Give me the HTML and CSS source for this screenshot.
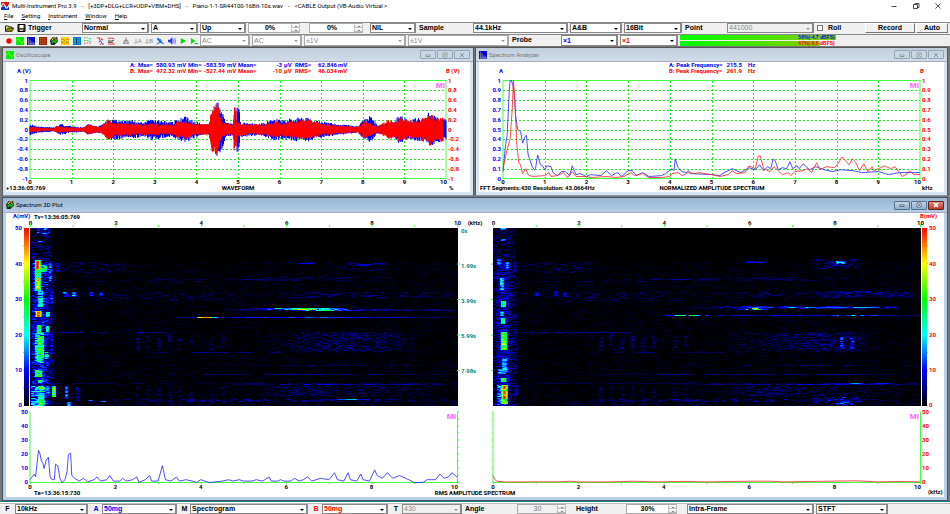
FILE: index.html
```html
<!DOCTYPE html>
<html lang="en">
<head>
<meta charset="utf-8">
<title>Multi-Instrument Pro 3.9</title>
<link rel="stylesheet" href="styles.css">
</head>
<body>
<header class="titlebar">
  <svg class="app-icon" viewBox="0 0 9 9"><path fill="#e01010" d="M0 0h9v5H0z"/><path fill="#1030d0" d="M0 5h9v4H0z"/><path d="M0 6C2 0 3 1 4.500 4.500S7 8 9 3" fill="none" stroke="#fff" stroke-width="1.300"/></svg>
  <span>Multi-Instrument Pro 3.9</span><span>-</span><span>[+3DP+DLG+LCR+UDP+VBM+DHS]</span><span>-</span><span>Piano-1-1-SR44100-16Bit-10s.wav</span><span>-</span><span>&lt;CABLE Output (VB-Audio Virtual &gt;</span>
  <div class="system">
    <button aria-label="Minimize"><svg viewBox="0 0 8 8"><path d="M1.500 4.500h5"/></svg></button>
    <button aria-label="Restore"><svg viewBox="0 0 8 8"><path d="M1.500 2.500h4v4h-4zM3 2.500v-1h4v4H5.500"/></svg></button>
    <button aria-label="Close"><svg viewBox="0 0 8 8"><path d="M1.500 1.500l5 5m0-5l-5 5"/></svg></button>
  </div>
</header>
<nav class="menu">
  <a href="#"><u>F</u>ile</a><a href="#"><u>S</u>etting</a><a href="#"><u>I</u>nstrument</a><a href="#"><u>W</u>indow</a><a href="#"><u>H</u>elp</a>
</nav>

<div class="bar bar-trigger">
  <div class="file-tools">
    <button aria-label="Open"><svg viewBox="0 0 9 8"><path d="M.5 7V2h3l.5 1h3v1" fill="#ff8" stroke="#220"/><path d="M.5 7.500L2.500 4H9L7 7.500z" fill="#880" stroke="#220" stroke-width=".7"/></svg></button>
    <button aria-label="Save"><svg viewBox="0 0 9 8"><path d="M1 .5h7v7H1z" fill="#442" stroke="#000"/><path d="M2.500 1h4v3h-4z" fill="#fff"/><path d="M3 5.500h3V7H3z" fill="#ccc"/></svg></button>
    <label for="trigger">Trigger</label>
  </div>
  <div class="combo"><select id="trigger"><option>Normal</option></select></div>
  <div class="combo"><select aria-label="Trigger source"><option>A</option></select></div>
  <div class="combo"><select aria-label="Trigger edge"><option>Up</option></select></div>
  <div class="spin"><input aria-label="Trigger level" value="0%"><div class="steps"><button aria-label="Up"></button><button aria-label="Down"></button></div></div>
  <span></span>
  <div class="spin"><input aria-label="Trigger delay" value="0%"><div class="steps"><button aria-label="Up"></button><button aria-label="Down"></button></div></div>
  <span></span>
  <div class="combo"><select aria-label="Filter"><option>NIL</option></select></div>
  <label for="rate">Sample</label>
  <div class="combo"><select id="rate"><option>44.1kHz</option></select></div>
  <div class="combo"><select aria-label="Channels"><option>A&amp;B</option></select></div>
  <div class="combo"><select aria-label="Resolution"><option>16Bit</option></select></div>
  <label for="points">Point</label>
  <div class="combo"><select id="points" disabled><option>441000</option></select></div>
  <label class="check"><input type="checkbox">Roll</label>
  <button class="push">Record</button>
  <button class="push">Auto</button>
</div>

<div class="bar bar-tools">
  <div class="icons">
    <button aria-label="Start"><svg viewBox="0 0 9 9"><circle cx="4.500" cy="4.500" r="3" fill="#f00"/></svg></button>
    <button aria-label="Oscilloscope"><svg viewBox="0 0 9 9"><path fill="#0e0" d="M0 0h9v9H0z"/><path d="M.5 4C2 1 3 2 4.500 4.500S7 8 8.500 4" fill="none" stroke="#af0"/></svg></button>
    <button aria-label="Spectrum analyzer"><svg viewBox="0 0 9 9"><path fill="#00d" d="M0 0h9v9H0z"/><path d="M1.500 1v7m2-5v5m2-3v3m2-2v2M1 8h8" stroke="#bb8" stroke-width=".8"/></svg></button>
    <button aria-label="Multimeter"><svg viewBox="0 0 9 9"><path fill="#821" d="M0 0h9v9H0z"/><path d="M1 2h7M1 4.500h7M1 7h7" stroke="#f92" stroke-dasharray="1.500 1"/></svg></button>
    <button aria-label="Spectrum 3D plot"><svg viewBox="0 0 9 9"><path fill="#222" d="M0 4l3-4h5l1 5-4 4H1z"/><path d="M2 4l2-3h3" stroke="#ff0" fill="none"/><path d="M2 7l2-3 2 2 2-3" stroke="#0c0" fill="none" stroke-width="1.500"/><circle cx="6.500" cy="3" r="1" fill="#f55"/></svg></button>
    <button aria-label="Data logger"><svg viewBox="0 0 9 9"><path fill="#fd0" d="M0 0h9v9H0z"/><path d="M0 3l2-1 2 2 2-2 3 1M0 7l2-1 2 2 2-2 3 1" stroke="#f50" fill="none"/><path d="M0 5h9" stroke="#5b2" stroke-dasharray="1 1"/></svg></button>
    <button aria-label="LCR meter"><svg viewBox="0 0 9 9"><path fill="#07c" d="M0 0h9v9H0z"/><path d="M1 2h7M1 4.500h7M1 7h7" stroke="#0ff" stroke-dasharray="2 1"/><path d="M4 1v7" stroke="#024"/></svg></button>
    <button aria-label="Device test plan"><svg viewBox="0 0 9 9"><path d="M0 1h4l2 1h3M0 4h5l1 1h3" stroke="#0c5" fill="none" stroke-dasharray="2 1"/><path d="M0 7h3l2-1 3 2" stroke="#f35" fill="none" stroke-dasharray="2 1"/></svg></button>
    <button aria-label="Derived data"><svg viewBox="0 0 9 9"><path d="M1 1h3v3M6 1v2h2" stroke="#d22" fill="none"/><path d="M3 6l2-2 2 4h2" stroke="#33d" fill="none"/><path d="M4 8h2" stroke="#d22"/></svg></button>
    <button aria-label="Vibrometer"><svg viewBox="0 0 9 9"><path d="M1 1l2 1 2-1 3 1" stroke="#c22" fill="none"/><path d="M1 4.500h4l3-1M1 6h6" stroke="#333" fill="none"/><path d="M1 8h8" stroke="#e22"/></svg></button>
    <button class="spaced" aria-label="Hold" disabled><svg viewBox="0 0 9 9"><path d="M4.500 0v3" stroke="#999"/><path d="M2 4l2.500-2L7 4l1 4H1z" fill="#999"/><path d="M3 5h3v2H3z" fill="#ccc"/></svg></button>
    <button class="ground" aria-label="Zero A" disabled><svg viewBox="0 0 4 9"><path d="M2 2v4M0 6.500h4"/></svg>A</button>
    <button class="ground" aria-label="Zero B" disabled><svg viewBox="0 0 4 9"><path d="M2 2v4M0 6.500h4"/></svg>B</button>
    <button aria-label="Probe calibration"><svg viewBox="0 0 9 9"><path d="M1.500 1.500l5 5" stroke="#06f" stroke-width="2"/><path d="M5 5L1 8M6 6l3 2M4 2l2 2" stroke="#04c" fill="none"/><path d="M3 6.500l1 1" stroke="#0cf"/></svg></button>
    <button aria-label="Sound"><svg viewBox="0 0 9 9"><path d="M0 3h2l3-3v9L2 6H0z" fill="#33f"/><path d="M6 2.500q1.500 2 0 4M7.500 1q2 3.500 0 7" stroke="#44f" fill="none" stroke-width=".8"/></svg></button>
    <button aria-label="Play"><svg viewBox="0 0 9 9"><path d="M2 1l6 3.500L2 8z" fill="#0d0"/></svg></button>
    <button aria-label="Play loop"><svg viewBox="0 0 9 9"><path d="M1 1l5 3.500L1 8z" fill="#0d0"/><path d="M5 7.500h4" stroke="#0a0"/></svg></button>
  </div>
  <div class="combo light"><select aria-label="Coupling A" disabled><option>AC</option></select></div>
  <div class="combo light"><select aria-label="Coupling B" disabled><option>AC</option></select></div>
  <div class="combo light"><select aria-label="Range A" disabled><option>±1V</option></select></div>
  <div class="combo light"><select aria-label="Range B" disabled><option>±1V</option></select></div>
  <label for="probe">Probe</label>
  <div class="combo chan-a"><select id="probe"><option>×1</option></select></div>
  <div class="combo chan-b"><select aria-label="Probe B"><option>×1</option></select></div>
  <div class="levels">
    <div class="level level-a"><span class="chan-a">58%(-4.7 dBFS)</span></div>
    <div class="level level-b"><span class="chan-b">47%(-6.6 dBFS)</span></div>
  </div>
</div>

<main class="desktop">
  <div class="pair">
    <section class="window">
      <div class="caption"><svg class="cap-icon" viewBox="0 0 9 9"><path fill="#0e0" d="M0 0h9v9H0z"/><path d="M.5 5C2 1 3 2 4.500 4.500S7 8 8.500 4" fill="none" stroke="#af0"/></svg><h2>Oscilloscope</h2>
        <div class="cap-buttons"><button aria-label="Minimize"><svg viewBox="0 0 8 6"><path d="M2 3h4v1.500H2z"/></svg></button><button aria-label="Maximize"><svg viewBox="0 0 8 6"><path d="M2 1h4v4H2zM3.500 2.500h1v1h-1z"/></svg></button><button aria-label="Close"><svg viewBox="0 0 8 6"><path d="M2 1l4 4m0-4L2 5"/></svg></button></div>
      </div>
      <svg class="plot" id="scope" viewBox="6 62 464 130"></svg>
    </section>
    <section class="window">
      <div class="caption"><svg class="cap-icon" viewBox="0 0 9 9"><path fill="#00d" d="M0 0h9v9H0z"/><path d="M1.500 1v7m2-5v5m2-3v3m2-2v2M1 8h8" stroke="#bb8" stroke-width=".8"/></svg><h2>Spectrum Analyzer</h2>
        <div class="cap-buttons"><button aria-label="Minimize"><svg viewBox="0 0 8 6"><path d="M2 3h4v1.500H2z"/></svg></button><button aria-label="Maximize"><svg viewBox="0 0 8 6"><path d="M2 1h4v4H2zM3.500 2.500h1v1h-1z"/></svg></button><button aria-label="Close"><svg viewBox="0 0 8 6"><path d="M2 1l4 4m0-4L2 5"/></svg></button></div>
      </div>
      <svg class="plot" id="spectrum" viewBox="479 62 465 130"></svg>
    </section>
  </div>
  <section class="window active">
    <div class="caption"><svg class="cap-icon" viewBox="0 0 9 9"><path fill="#222" d="M0 4l3-4h5l1 5-4 4H1z"/><path d="M2 4l2-3h3" stroke="#ff0" fill="none"/><path d="M2 7l2-3 2 2 2-3" stroke="#0c0" fill="none" stroke-width="1.500"/><circle cx="6.500" cy="3" r="1" fill="#f55"/></svg><h2>Spectrum 3D Plot</h2>
      <div class="cap-buttons"><button aria-label="Minimize"><svg viewBox="0 0 8 6"><path d="M2 3h4v1.500H2z"/></svg></button><button aria-label="Maximize"><svg viewBox="0 0 8 6"><path d="M2 1h4v4H2zM3.500 2.500h1v1h-1z"/></svg></button><button class="close" aria-label="Close"><svg viewBox="0 0 8 6"><path d="M2 1l4 4m0-4L2 5"/></svg></button></div>
    </div>
    <svg class="plot" id="plot3d" viewBox="6 213 938 284">
      <defs><linearGradient id="heat" x1="0" y1="1" x2="0" y2="0"><stop offset="0" stop-color="#000"/><stop offset=".2" stop-color="#00f"/><stop offset=".4" stop-color="#0ff"/><stop offset=".6" stop-color="#0f0"/><stop offset=".8" stop-color="#ff0"/><stop offset="1" stop-color="#f00"/></linearGradient></defs>
    </svg>
  </section>
</main>

<footer class="bar bar-plot">
  <label for="freq">F</label>
  <div class="combo"><select id="freq"><option>10kHz</option></select></div>
  <label class="chan-a" for="range-a">A</label>
  <div class="combo chan-a"><select id="range-a"><option>50mg</option></select></div>
  <label for="mode">M</label>
  <div class="combo"><select id="mode"><option>Spectrogram</option></select></div>
  <label class="chan-b" for="range-b">B</label>
  <div class="combo chan-b"><select id="range-b"><option>50mg</option></select></div>
  <label for="frames">T</label>
  <div class="combo"><select id="frames" disabled><option>430</option></select></div>
  <label class="left" for="angle">Angle</label>
  <div class="spin"><input id="angle" value="30" disabled><div class="steps"><button aria-label="Up"></button><button aria-label="Down"></button></div></div>
  <label class="left height-label" for="height">Height</label>
  <div class="spin"><input id="height" value="30%"><div class="steps"><button aria-label="Up"></button><button aria-label="Down"></button></div></div>
  <span></span>
  <div class="combo"><select aria-label="Frame mode"><option>Intra-Frame</option></select></div>
  <div class="combo"><select aria-label="Transform"><option>STFT</option></select></div>
</footer>
<script src="plots.js"></script>
</body>
</html>
```
FILE: styles.css
```css
* { box-sizing: border-box; }
body {
  margin: 0;
  min-height: 100vh;
  display: flex;
  flex-direction: column;
  background: #fff;
  color: #000;
  font-family: Roboto, "Liberation Sans", sans-serif;
  font-size: 6px;
  line-height: 8px;
}
button, select, input { font: inherit; color: inherit; margin: 0; padding: 0; border: 0; border-radius: 0; background: none; }
svg { display: block; }

.titlebar { display: flex; align-items: center; gap: 5px; height: 12px; padding-left: 1px; white-space: pre; }
.titlebar .app-icon { width: 8px; height: 8px; margin-right: -2px; }
.system { display: flex; gap: 14px; margin-left: auto; padding-right: 8px; }
.system button { width: 8px; height: 8px; }
.system svg { width: 8px; height: 8px; fill: none; stroke: #222; stroke-width: 0.8; }

.menu { display: flex; gap: 8px; height: 10px; padding-left: 4px; }
.menu a { color: #000; text-decoration: none; }

.bar {
  display: grid;
  align-items: stretch;
  height: 12px;
  padding-bottom: 1px;
  background: #f0f0f0;
  border-top: 1px solid #8a8a8a;
  font-family: "Liberation Sans", sans-serif;
  font-size: 7px;
  font-weight: bold;
  line-height: 10px;
}
.bar > * { min-width: 0; }
.bar-trigger { grid-template-columns: 82fr 69fr 49fr 48fr 52fr 9fr 54fr 7fr 48fr 55fr 97fr 54fr 60fr 43fr 89fr 49fr 51fr 33fr 1fr; }
.bar-tools { grid-template-columns: 200fr 52fr 52fr 104fr 103fr 50fr 59fr 60fr 269fr 1fr; }
.bar-plot { grid-template-columns: 15fr 75fr 12fr 77fr 11fr 120fr 12fr 68fr 12fr 62fr 53fr 49fr 60fr 51fr 10fr 129fr 74fr 60fr; margin-top: 1px; border-top-color: #bbb; }
.bar > label { padding-left: 1px; }
.bar-plot > label { padding-left: 0; text-align: center; }
.bar-plot > .left { text-align: left; padding-left: 1px; }
.bar-plot > .height-label { padding-left: 10px; }

.combo { position: relative; margin-right: 2px; border: 1px solid #888; border-right-width: 2px; background: #fff; }
.combo::after {
  content: "";
  position: absolute;
  right: 2px;
  top: 4px;
  border: 2px solid transparent;
  border-top-color: #000;
  border-bottom: 0;
}
.combo select { display: block; width: 100%; height: 100%; padding-left: 1px; appearance: none; line-height: 8px; opacity: 1; }
.combo:has(:disabled) { background: #f0f0f0; color: #888; font-weight: normal; }
.combo:has(:disabled)::after { border-top-color: #999; }
.combo.light { background: #fff; border-color: #a8a8a8; }
.chan-a { color: #00f; }
.chan-b { color: #f00; }

.spin { display: flex; border: 1px solid #aaa; border-right: 0; background: #fff; }
.spin input { flex: 1; min-width: 0; text-align: center; line-height: 8px; }
.spin:has(:disabled) { background: #f0f0f0; color: #777; font-weight: normal; }
.steps { display: grid; width: 9px; grid-template-rows: 1fr 1fr; }
.steps button { display: grid; place-items: center; background: #eee; border: 1px solid #bbb; border-top-color: #fff; }
.steps button::after { content: ""; border: 1px solid transparent; border-bottom-color: #222; border-top: 0; }
.steps button + button::after { border: 1px solid transparent; border-top-color: #222; border-bottom: 0; }

.check { display: flex; align-items: center; gap: 5px; }
.check input { width: 6px; height: 6px; appearance: none; background: #fff; border: 1px solid #777; }
.push { border: 1px solid #fff; border-right-color: #777; border-bottom-color: #777; margin-right: 1px; background: #f0f0f0; text-align: center; line-height: 8px; }

.file-tools { display: flex; align-items: center; gap: 3px; padding-left: 5px; }
.file-tools svg { width: 9px; height: 8px; }
.file-tools label { margin-left: -1px; }
.icons { display: flex; padding-left: 3px; align-items: center; }
.icons button { flex: 1; min-width: 0; display: grid; place-items: center; }
.icons svg { width: 8px; height: 8px; }
.icons .spaced { margin-left: 4px; }
.icons .ground { display: flex; justify-content: center; color: #888; font-weight: normal; line-height: 8px; font-size: 6px; }
.icons .ground svg { width: 4px; fill: none; stroke: #888; stroke-width: 0.8; }

.levels { display: grid; grid-template-rows: 1fr 1fr; gap: 1px; font-size: 5px; line-height: 5px; }
.level { padding-left: 44%; background: linear-gradient(90deg, #0f0, #8c0) no-repeat #eee; overflow: hidden; }
.level span { display: block; }
.level-a { background-size: 58% 100%; }
.level-b { background-size: 52% 100%; }

.desktop { padding: 1px 2px 0; background: #777; border-bottom: 1px solid #138080; }
.pair { display: grid; grid-template-columns: 472fr 473fr; gap: 1px; margin-bottom: 1px; }
.window { min-width: 0; padding: 0 3px 3px; background: #d7e4f2; border: 1px solid #555; border-bottom-color: #89a; }
.window.active { background: #b9d1ea; border-color: #456; }
.caption { display: flex; align-items: center; gap: 2px; height: 14px; margin: 0 -3px; padding: 0 3px; background: linear-gradient(#c1cedc, #d0dce8); border-bottom: 1px solid #aab; color: #777; }
.active .caption { height: 15px; background: linear-gradient(#9ab5d0, #b4cde8); color: #000; }
.caption h2 { margin: 0; font-size: 6px; font-weight: normal; }
.cap-icon { width: 8px; height: 8px; }
.cap-buttons { display: flex; gap: 1px; margin-left: auto; }
.cap-buttons button { display: grid; place-items: center; width: 16px; height: 9px; border: 1px solid #95a3b3; border-radius: 1px; background: #c9d6e4; }
.cap-buttons svg { width: 8px; height: 6px; fill: #fff; stroke: #677; stroke-width: 0.7; }
.active .cap-buttons button { border-color: #567490; background: linear-gradient(#c2d5e8, #8faecd); }
.active .cap-buttons svg { stroke: #345; }
.active .cap-buttons .close { background: linear-gradient(#dc9184, #b83a25); border-color: #6c2018; }
.active .cap-buttons .close svg { stroke: #fff; stroke-width: 1.5; }

.plot { width: 100%; height: auto; background: #fff; font-family: Roboto, sans-serif; font-size: 6px; font-weight: bold; }
.plot text { white-space: pre; }
.end { text-anchor: end; }
.mid { text-anchor: middle; }
.blue { fill: #00f; }
.red { fill: #f00; }
.teal { fill: #088; }
.brand { fill: #f6f; font-size: 8px; text-anchor: end; }
.grid { fill: none; stroke: #2e2; stroke-dasharray: 2 2; shape-rendering: crispEdges; }
.frame { fill: none; stroke: #4f4; }
.line { fill: none; stroke-width: 0.8; }
.line-a { stroke: #22f; }
.line-b { stroke: #f22; }
.wave { fill: none; stroke-width: 1; }
.wave-a { stroke: #00f; }
.wave-b { stroke: #f00; }
.cells { shape-rendering: crispEdges; }
.ramp { fill: url(#heat); }
```
FILE: plots.js
```js
const NS = "http://www.w3.org/2000/svg";
const scope = document.getElementById("scope");
const spectrum = document.getElementById("spectrum");
const plot3d = document.getElementById("plot3d");

function add(parent, tag, attrs, content) {
  const el = document.createElementNS(NS, tag);
  for (const key in attrs) el.setAttribute(key, attrs[key]);
  if (content !== undefined) el.textContent = content;
  parent.appendChild(el);
  return el;
}
function label(svg, x, y, content, cls) {
  add(svg, "text", { x: x, y: y, class: cls || "" }, content);
}
function generator(seed) {
  let s = seed;
  return function () {
    s = (s * 1664525 + 1013904223) % 4294967296;
    return s / 4294967296;
  };
}
function curve(svg, data, x0, w, y0, scale, cls) {
  const n = data.split(" ").map(p => p.split(",").map(Number));
  add(svg, "path", { class: "line " + cls, d: "M" + n.map(p => (x0 + p[0] * w / 10).toFixed(1) + " " + (y0 - p[1] * scale).toFixed(1)).join("L") });
}
function gridLines(svg, x, y, w, h) {
  let d = "";
  for (let i = 1; i < 10; i++) {
    const gx = Math.round(x + i * w / 10) + 0.5;
    const gy = Math.round(y + i * h / 10) + 0.5;
    d += `M${gx} ${y}v${h}M${x} ${gy}h${w}`;
  }
  add(svg, "path", { class: "grid", d: d });
  add(svg, "rect", { class: "frame", x: x, y: y, width: w, height: h });
}
function tick(svg, left, right, i, y) {
  if (i === 10) label(svg, right + 1, y, i, "end");
  else label(svg, left + i * (right - left) / 10, y, i, "mid");
}
function axes(svg, x, y, w, h, names) {
  for (let i = 0; i <= 10; i++) {
    const ty = y + i * h / 10 + 2;
    label(svg, x - 2, ty, names[i], "blue end");
    label(svg, x + w + 2, ty, names[i], "red");
    tick(svg, x, x + w, i, 184);
  }
}

/* Oscilloscope */
gridLines(scope, 30, 80.5, 416, 98);
const envelope = [
  [30,5,3],[38,3,2],[54,2,1],[57,3,4],[61,5,3],[72,3,2],[84,2,2],[88,5,5],[97,3,3],[101,4,3],[105,7,7],[108,9,10],[114,10,6],[124,8,6],[134,9,6],[143,6,5],[152,10,6],
  [163,8,5],[172,7,5],[179,10,8],[186,12,9],[195,8,5],[202,5,5],[209,5,6],[212,16,20],[217,25,24],[219,28,20],[221,20,9],[223,16,7],[226,6,6],[233,6,5],[234,7,21],[236,7,20],[237,22,6],[239,27,7],
  [240,7,6],[252,6,5],[263,6,5],[274,10,8],[283,9,7],[297,11,8],[308,11,10],[317,8,7],[325,7,5],[340,5,4],[358,3,3],[364,9,8],[370,13,6],[378,4,3],[388,6,9],[394,7,8],
  [399,14,11],[408,9,9],[418,11,8],[425,10,12],[430,18,15],[435,12,11],[441,11,12],[446,10,9]
];
function wave(column, seed, cls, end) {
  const rand = generator(seed);
  let d = "", k = 0;
  for (let x = 30; x <= end; x += 0.5) {
    while (k < envelope.length - 2 && envelope[k + 1][0] < x) k++;
    const a = envelope[k], b = envelope[k + 1];
    const v = a[column] + (b[column] - a[column]) * (x - a[0]) / (b[0] - a[0]);
    d += `M${x} ${(129.5 - v * (0.6 + rand() * 0.5)).toFixed(1)}V${(129.5 + v * (0.6 + rand() * 0.5)).toFixed(1)}`;
  }
  add(scope, "path", { class: "wave " + cls, d: d });
}
wave(1, 7, "wave-a", 446);
wave(2, 21, "wave-b", 443);
axes(scope, 30, 80.5, 416, 98, ["1", "0.8", "0.6", "0.4", "0.2", "0", "-0.2", "-0.4", "-0.6", "-0.8", "-1"]);
label(scope, 17, 73, "A (V)", "blue");
label(scope, 446, 73, "B (V)", "red");
[["blue", 67, "A:", "580.93", "-583.59", "-3", "62.846"], ["red", 73, "B:", "472.32", "-527.44", "-10", "46.034"]].forEach(r => {
  const [c, y, name, max, min, mean, rms] = r;
  label(scope, 130, y, name, c);
  label(scope, 138, y, "Max=", c);
  label(scope, 175, y, max, c + " end");
  label(scope, 177, y, "mV", c);
  label(scope, 188, y, "Min=", c);
  label(scope, 225, y, min, c + " end");
  label(scope, 227, y, "mV", c);
  label(scope, 238, y, "Mean=", c);
  label(scope, 282, y, mean, c + " end");
  label(scope, 284, y, "µV", c);
  label(scope, 295, y, "RMS=", c);
  label(scope, 337, y, rms, c + " end");
  label(scope, 338, y, "mV", c);
});
label(scope, 6, 190, "+13:36:05:769");
label(scope, 238, 190, "WAVEFORM", "mid");
label(scope, 449, 190, "%");
label(scope, 445, 88, "MI", "brand");

/* Spectrum analyzer */
gridLines(spectrum, 503, 80.5, 417, 98);
curve(spectrum, "0,.07 .05,.3 .1,.45 .15,.9 .17,1 .2,1 .24,.95 .28,.8 .3,.65 .35,.5 .42,.48 .47,.36 .53,.43 .56,.44 .6,.25 .7,.12 .75,.09 .78,.1 .83,.24 .9,.14 .95,.13 1,.09 1.05,.13 1.15,.12 1.2,.06 1.3,.03 1.4,.07 1.5,.07 1.6,.03 1.66,.13 1.75,.04 1.85,.05 2,.02 2.1,.04 2.35,.03 2.48,.08 2.6,.03 2.75,.06 2.85,.02 3,.08 3.1,.08 3.2,.03 3.35,.06 3.5,.02 3.8,.03 3.9,.05 4.05,.1 4.1,.08 4.13,.2 4.2,.11 4.3,.07 4.4,.06 4.45,.08 4.5,.05 5,.04 5.2,.03 5.3,.06 5.5,.1 5.7,.06 5.9,.11 6.05,.09 6.15,.14 6.25,.08 6.35,.12 6.42,.1 6.48,.2 6.53,.18 6.6,.09 6.7,.11 6.8,.1 6.88,.17 6.95,.1 7.05,.13 7.1,.1 7.2,.15 7.35,.09 7.5,.12 7.7,.09 7.9,.07 8.1,.09 8.4,.08 8.6,.06 9,.07 9.25,.04 9.5,.06 10,.06", 503, 417, 178.5, 98, "line-a");
curve(spectrum, "0,.1 .1,.3 .17,.4 .22,.7 .25,1 .28,.85 .3,.65 .33,.35 .38,.16 .42,.14 .47,.05 .55,.1 .6,.04 .7,.02 1,.03 1.1,.06 1.15,.02 1.3,.03 1.45,.06 1.55,.01 1.66,.07 1.75,.02 2,.02 2.1,.01 2.5,.02 2.7,.01 2.9,.02 3.07,.06 3.15,.03 3.35,.05 3.5,.01 3.8,.01 4,.02 4.05,.05 4.2,.06 4.3,.03 4.45,.06 4.6,.05 4.7,.06 5,.04 5.2,.02 5.4,.04 5.5,.08 5.6,.05 5.8,.06 5.9,.13 6.05,.1 6.12,.23 6.17,.23 6.25,.1 6.4,.07 6.5,.12 6.6,.08 6.7,.04 6.85,.06 6.9,.03 7,.07 7.2,.08 7.3,.1 7.4,.06 7.52,.16 7.6,.09 7.75,.12 7.95,.11 8.05,.16 8.13,.22 8.3,.14 8.38,.2 8.45,.17 8.55,.08 8.65,.15 8.75,.07 8.85,.12 8.9,.08 9,.1 9.15,.13 9.3,.1 9.4,.12 9.5,.07 9.57,.02 9.7,.05 9.75,.08 9.85,.04 10,.04", 503, 417, 178.5, 98, "line-b");
axes(spectrum, 503, 80.5, 417, 98, ["1", "0.9", "0.8", "0.7", "0.6", "0.5", "0.4", "0.3", "0.2", "0.1", "0"]);
label(spectrum, 499, 73, "A", "blue");
label(spectrum, 920, 73, "B", "red");
label(spectrum, 669, 67, "A: Peak Frequency=", "blue");
label(spectrum, 669, 73, "B: Peak Frequency=", "red");
label(spectrum, 742, 67, "215.5", "blue end");
label(spectrum, 742, 73, "261.9", "red end");
label(spectrum, 748, 67, "Hz", "blue");
label(spectrum, 748, 73, "Hz", "red");
label(spectrum, 480, 190, "FFT Segments:430");
label(spectrum, 533, 190, "Resolution: 43.0664Hz");
label(spectrum, 712, 190, "NORMALIZED AMPLITUDE SPECTRUM", "mid");
label(spectrum, 922, 190, "kHz");
label(spectrum, 919, 88, "MI", "brand");

/* Spectrum 3D plot */
const stops = [[0, 0, 0], [0, 0, 255], [0, 255, 255], [0, 255, 0], [255, 255, 0], [255, 0, 0]];
function heat(v) {
  const p = Math.min(0.999, v) * 5, i = Math.floor(p), f = p - i;
  return "rgb(" + stops[i].map((c, k) => Math.round(c + (stops[i + 1][k] - c) * f)).join(",") + ")";
}
/* Each feature: x, y, width, height, mean level, spread, density, run length in cells */
function spectrogram(left, seed, features) {
  const W = 428, H = 178, top = 228, rand = generator(seed);
  const field = new Float32Array(W * H);
  features.forEach(([fx, fy, fw, fh, mean, spread, density, run]) => {
    const taper = fw > 30 && fw < 428;
    for (let y = Math.round(fy); y < fy + fh; y++) {
      let x = fx - (run > 1 ? Math.floor(rand() * run) : 0);
      while (x < fx + fw) {
        const len = Math.max(1, Math.round(run * (0.5 + rand())));
        let v = rand() < density ? mean + (rand() - 0.5) * spread * 2 : 0;
        if (taper) v *= 0.35 + 0.75 * Math.sin(Math.PI * Math.min(1, Math.max(0, (x - fx) / fw)));
        for (let k = 0; k < len && x + k < fx + fw; k++) {
          const px = x + k - left, py = y - top;
          if (x + k >= fx && px >= 0 && px < W && py >= 0 && py < H) field[py * W + px] = Math.max(field[py * W + px], v);
        }
        x += len;
      }
    }
  });
  /* Blend neighbouring frequency bins */
  const soft = new Float32Array(W * H);
  for (let i = 0; i < W * H; i++) {
    const c = i % W;
    const l = c ? field[i - 1] : field[i], r = c < W - 1 ? field[i + 1] : field[i];
    soft[i] = field[i] * 0.6 + (l + r) * 0.2;
  }
  add(plot3d, "rect", { x: left, y: top, width: W, height: H });
  const paths = {};
  for (let y = 0; y < H; y++) {
    for (let x = 0; x < W;) {
      const q = Math.round(soft[y * W + x] * 50);
      let e = x + 1;
      while (e < W && Math.round(soft[y * W + e] * 50) === q) e++;
      if (q > 0) paths[q] = (paths[q] || "") + `M${left + x} ${top + y}h${e - x}v1h${x - e}z`;
      x = e;
    }
  }
  const g = add(plot3d, "g", { class: "cells" });
  for (const q in paths) add(g, "path", { fill: heat(q / 50), d: paths[q] });
}
function common(o) {
  const list = [
    [o, 262, 428, 144, 0.012, 0.016, 0.5, 6],
    [o, 228, 22, 34, 0.06, 0.08, 0.7, 3], [o, 262, 24, 144, 0.08, 0.09, 0.7, 3],
    [o + 24, 262, 80, 11, 0.06, 0.05, 0.4, 3],
    [o + 24, 281, 190, 1, 0.06, 0.05, 0.6, 7], [o + 110, 279, 170, 1, 0.07, 0.04, 0.6, 8],
    [o + 24, 292, 200, 9, 0.04, 0.05, 0.4, 4], [o, 332, 145, 1, 0.12, 0.06, 0.7, 6],
    [o + 95, 352, 180, 1, 0.08, 0.04, 0.7, 9], [o + 90, 374, 210, 1, 0.07, 0.03, 0.7, 9],
    [o + 220, 292, 208, 6, 0.06, 0.05, 0.5, 5], [o + 190, 277, 180, 4, 0.04, 0.04, 0.5, 6],
    [o + 235, 332, 150, 20, 0.05, 0.06, 0.5, 3], [o + 275, 333, 95, 18, 0.08, 0.06, 0.4, 3],
    [o + 180, 365, 248, 1, 0.06, 0.04, 0.7, 7], [o + 150, 374, 278, 1, 0.08, 0.04, 0.7, 9],
    [o, 383, 428, 1, 0.05, 0.04, 0.8, 8], [o + 200, 384, 228, 1, 0.13, 0.07, 0.9, 6],
    [o + 220, 386, 190, 11, 0.04, 0.06, 0.5, 3], [o + 235, 386, 70, 10, 0.07, 0.05, 0.5, 4],
    [o + 60, 399, 368, 3, 0.07, 0.08, 0.6, 4], [o, 403, 428, 3, 0.03, 0.04, 0.5, 4]
  ];
  [106, 116, 127, 138, 148, 159, 180, 191].forEach((x, i) => list.push([o + x, i % 2 ? 334 : 337, 4, 14, 0.07, 0.06, 0.6, 3], [o + x, 386, 4, 18, 0.05, 0.05, 0.5, 3]));
  return list;
}
spectrogram(30, 11, common(30).concat([
  [37, 228, 13, 6, 0.25, 0.2, 0.7, 4], [38, 241, 6, 1, 0.25, 0.1, 1, 4],
  [32, 261, 17, 145, 0.16, 0.12, 0.7, 3], [35, 260, 6, 31, 0.58, 0.18, 1, 4], [36, 261, 3, 8, 0.98, 0.05, 1, 3],
  [41, 265, 6, 7, 0.45, 0.2, 0.9, 3], [37, 278, 3, 11, 0.72, 0.25, 1, 3], [38, 291, 5, 16, 0.45, 0.15, 0.9, 3],
  [49, 261, 3, 20, 0.25, 0.15, 0.8, 3], [56, 262, 4, 10, 0.17, 0.1, 0.8, 4], [50, 292, 3, 15, 0.2, 0.15, 0.7, 3],
  [63, 292, 5, 2, 0.32, 0.1, 1, 5], [64, 294, 5, 3, 0.25, 0.1, 1, 5], [72, 292, 4, 5, 0.35, 0.12, 1, 5], [90, 292, 3, 4, 0.2, 0.1, 1, 4], [99, 292, 4, 4, 0.2, 0.1, 1, 4],
  [36, 311, 5, 6, 0.95, 0.15, 1, 5], [46, 312, 4, 5, 0.4, 0.15, 1, 4], [37, 325, 4, 8, 0.58, 0.1, 1, 4], [46, 326, 3, 6, 0.5, 0.15, 1, 3],
  [35, 333, 9, 30, 0.4, 0.22, 0.9, 3], [38, 336, 5, 18, 0.6, 0.2, 0.9, 3], [45, 352, 4, 7, 0.5, 0.2, 0.9, 3], [50, 334, 3, 20, 0.17, 0.1, 0.8, 3],
  [35, 370, 7, 7, 0.5, 0.2, 0.9, 3], [38, 380, 4, 3, 0.6, 0.2, 1, 3], [40, 358, 4, 25, 0.2, 0.1, 0.8, 3],
  [31, 386, 14, 20, 0.33, 0.15, 0.9, 3], [39, 386, 5, 19, 0.55, 0.2, 0.9, 3], [46, 386, 4, 10, 0.3, 0.1, 0.8, 3], [52, 386, 4, 11, 0.6, 0.25, 1, 4], [65, 386, 3, 13, 0.3, 0.12, 0.9, 3],
  [67, 402, 4, 4, 0.34, 0.1, 1, 4], [76, 386, 3, 15, 0.15, 0.1, 0.8, 3], [88, 400, 5, 1, 0.3, 0.05, 1, 3], [100, 401, 6, 1, 0.28, 0.05, 1, 3],
  [285, 262, 45, 2, 0.12, 0.1, 0.7, 8], [345, 263, 42, 3, 0.12, 0.09, 0.7, 8], [340, 266, 50, 5, 0.05, 0.04, 0.5, 5],
  [225, 309, 232, 2, 0.12, 0.08, 0.9, 6], [250, 308, 95, 1, 0.42, 0.17, 1, 7], [258, 309, 90, 1, 0.4, 0.3, 0.9, 4], [298, 309, 18, 1, 0.75, 0.2, 1, 3], [290, 310, 60, 1, 0.3, 0.25, 0.6, 5],
  [175, 317, 282, 1, 0.18, 0.08, 1, 7], [197, 317, 20, 1, 0.55, 0.3, 1, 4], [203, 317, 8, 1, 0.9, 0.1, 1, 4],
  [325, 399, 45, 1, 0.24, 0.15, 0.9, 4]
]));
spectrogram(493, 29, common(493).concat([
  [500, 228, 6, 2, 0.3, 0.1, 1, 3], [501, 239, 5, 2, 0.25, 0.1, 1, 3], [497, 259, 4, 6, 0.3, 0.1, 1, 3], [506, 262, 3, 8, 0.3, 0.1, 1, 3],
  [497, 262, 12, 144, 0.12, 0.1, 0.7, 3],
  [500, 278, 4, 12, 0.36, 0.12, 1, 3], [501, 301, 5, 6, 0.52, 0.12, 1, 4], [500, 311, 4, 5, 0.32, 0.1, 1, 4], [501, 318, 4, 6, 0.55, 0.1, 1, 4],
  [501, 332, 6, 18, 0.65, 0.16, 1, 3], [502, 358, 5, 13, 0.33, 0.12, 0.9, 3], [498, 369, 10, 5, 0.36, 0.14, 0.9, 3], [501, 378, 5, 4, 0.6, 0.16, 1, 3],
  [497, 385, 11, 20, 0.28, 0.15, 0.9, 3], [502, 385, 5, 19, 0.75, 0.18, 1, 4], [503, 386, 3, 3, 0.98, 0.04, 1, 3], [503, 391, 3, 3, 0.98, 0.04, 1, 3], [503, 396, 3, 3, 0.98, 0.04, 1, 3],
  [515, 385, 3, 10, 0.15, 0.05, 1, 3], [535, 292, 4, 4, 0.17, 0.08, 1, 3], [554, 291, 4, 5, 0.17, 0.08, 1, 3], [563, 292, 4, 5, 0.14, 0.08, 1, 3],
  [745, 261, 20, 2, 0.16, 0.08, 0.8, 6], [810, 259, 50, 10, 0.09, 0.08, 0.5, 5], [836, 261, 9, 3, 0.32, 0.12, 0.9, 4],
  [818, 291, 100, 6, 0.1, 0.06, 0.5, 4], [690, 306, 210, 3, 0.13, 0.1, 0.8, 5], [728, 307, 170, 1, 0.28, 0.15, 0.8, 5], [738, 309, 32, 1, 0.4, 0.25, 0.9, 4], [752, 308, 6, 1, 0.85, 0.1, 1, 3],
  [660, 315, 270, 1, 0.12, 0.08, 0.9, 6], [664, 315, 45, 1, 0.42, 0.15, 0.8, 4], [830, 315, 52, 1, 0.42, 0.2, 0.7, 4],
  [840, 337, 4, 12, 0.2, 0.14, 0.8, 2], [850, 337, 4, 12, 0.22, 0.14, 0.8, 2], [822, 383, 70, 1, 0.24, 0.1, 0.8, 5],
  [810, 397, 50, 6, 0.15, 0.13, 0.6, 4], [835, 402, 18, 3, 0.26, 0.1, 0.7, 4]
]));

[[30, 457], [493, 920]].forEach(([l, r], side) => {
  let d = "";
  for (let i = 0; i <= 10; i++) {
    const x = l + 0.5 + i * 42.7;
    const up = i % 2 ? 2 : 3;
    d += `M${x.toFixed(1)} 227v-${up}M${x.toFixed(1)} 482v2`;
    if (i % 2 === 0) {
      label(plot3d, x, 225, i, "mid");
      tick(plot3d, l, r, i, 489);
    }
  }
  for (let i = 0; i <= 10; i++) d += `M${l} ${412 + i * 7}h-1M${r} ${412 + i * 7}h2`;
  d += `M${l} 412V482.500H${r + 0.5}V412`;
  add(plot3d, "path", { class: "frame", d: d });
  const bar = side ? 922 : 24;
  add(plot3d, "rect", { class: "ramp", x: bar, y: 228, width: 5, height: 178 });
  let ticks = "";
  for (let i = 0; i <= 10; i++) ticks += `M${side ? bar + 5 : bar} ${228 + i * 17.8}h${side ? 1 : -1}`;
  add(plot3d, "path", { class: "frame", d: ticks });
  for (let i = 0; i <= 5; i++) {
    label(plot3d, side ? 929 : 22, (i === 5 ? 229 : 230) + i * 35.6, 50 - i * 10, side ? "red" : "blue end");
    label(plot3d, side ? 922 : 28, 414 + i * 14, 50 - i * 10, side ? "red" : "blue end");
  }
  label(plot3d, r - 1, 419, "MI", "brand");
});
["0s", "1.99s", "3.99s", "5.99s", "7.98s"].forEach((s, i) => label(plot3d, 461, 233 + i * 35, s, "teal"));
add(plot3d, "path", { class: "frame", d: "M457 264h3M457 299.500h3M457 335h3M457 370.500h3M493 264h-2M493 299.500h-2M493 335h-2M493 370.500h-2" });
label(plot3d, 13, 218, "A(mV)", "blue");
label(plot3d, 34, 219, "Tv=13:36:05:769");
label(plot3d, 920, 218, "B(mV)", "red");
label(plot3d, 475, 225, "(kHz)", "mid");
label(plot3d, 34, 495, "Te=13:36:15:730");
label(plot3d, 475, 495, "RMS AMPLITUDE SPECTRUM", "mid");
label(plot3d, 928, 494, "(kHz)");
curve(plot3d, "0,2 .05,4 .1,6 .13,4 .18,18 .2,23 .23,21 .27,15 .3,14 .33,10 .38,16 .43,18 .47,4 .52,2 .57,2 .6,13 .65,12 .7,3 .75,0 .82,2 .87,8 .9,20 .95,21 .98,5 1.05,3 1.15,1 1.25,3 1.35,.5 1.5,2 1.57,4 1.65,1 1.8,2 1.87,5 1.95,1 2.1,1 2.17,3 2.25,1 2.4,2 2.5,4 2.55,0 2.7,2 2.8,5 2.85,1 3,1 3.1,12 3.17,2 3.3,1 3.43,4 3.5,1 3.65,2 3.8,1 3.9,0 4,2 4.2,0 4.5,1 4.65,2 4.75,1 4.9,2 5,1 5.2,1 5.3,2 5.45,1 5.6,4 5.65,1 5.8,1 5.87,2 5.95,1 6.1,1 6.2,3 6.3,1 6.4,2 6.5,4 6.6,1 6.8,3 7,2 7.13,7 7.2,2 7.35,1 7.45,7 7.5,2 7.65,1 7.75,6 7.8,2 7.95,1 8.07,9 8.13,5 8.25,3 8.37,7 8.5,3 8.65,5 8.8,3 9,0 9.2,0 9.3,2 9.5,2 9.6,6 9.7,3 9.8,4 9.88,7 10,4", 30, 427, 482.5, 1.4, "line-a");
curve(plot3d, "0,5 .05,2 .1,.8 .3,.4 1.6,.5 1.8,.9 2,.4 2.7,.4 3.3,.9 3.8,.4 4.5,.8 5,.4 6,.9 6.5,.9 6.8,.4 8,1 8.5,1.2 9,.4 9.6,.7 10,.4", 493, 427, 482.5, 1.4, "line-b");
```
